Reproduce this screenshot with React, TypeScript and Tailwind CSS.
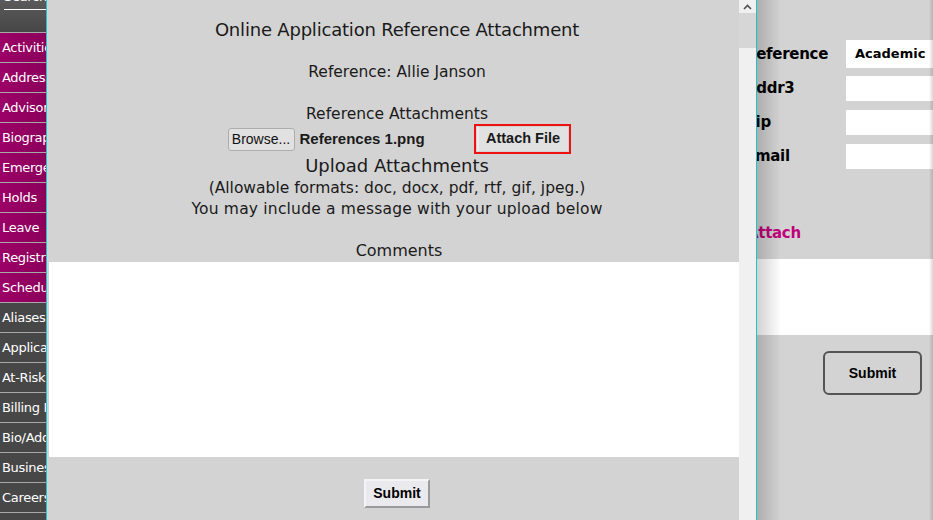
import React from "react";

const gothic = { fontFamily: '"DejaVu Sans", sans-serif' };

const magentaItems = ["Activities", "Addresses", "Advisor", "Biographical", "Emergency", "Holds", "Leave", "Registration", "Schedule"];
const grayItems = ["Aliases", "Applications", "At-Risk", "Billing History", "Bio/Addr", "Business", "Careers", "Contacts"];

function Sidebar() {
  return (
    <div className="w-[46px] shrink-0 h-full bg-[#484848] overflow-hidden text-white text-[13px] font-['DejaVu_Sans',sans-serif] tracking-[-0.3px]">
      <div className="h-[32px] bg-gradient-to-b from-[#5a5a5a] to-[#474747] pl-[4px] overflow-hidden">
        <div className="mt-[-11px] leading-[16px] h-[21px] whitespace-nowrap border-b border-white w-[60px]">Search</div>
      </div>
      {magentaItems.map((t) => (
        <div key={t} className="h-[30px] border-t border-[#a8a8a8] bg-gradient-to-r from-[#9c0066] to-[#8c005c] pl-[2px] flex items-center whitespace-nowrap">
          {t}
        </div>
      ))}
      {grayItems.map((t) => (
        <div key={t} className="h-[30px] border-t border-[#a8a8a8] bg-[#474747] pl-[2px] flex items-center whitespace-nowrap">
          {t}
        </div>
      ))}
    </div>
  );
}

function Modal() {
  return (
    <div className="w-[711px] shrink-0 h-full flex border-x border-[#1fc3d0]">
      <div className="w-[692px] h-full bg-[#d3d3d3] flex flex-col text-[#1a1a1a] font-['DejaVu_Sans',sans-serif]">
        <div className="flex flex-col items-center pl-[8px]">
          <div className="mt-[19px] h-[22px] leading-[22px] text-[18px] tracking-[-0.2px]">Online Application Reference Attachment</div>
          <div className="mt-[21px] h-[20px] leading-[20px] text-[15.5px]">Reference: Allie Janson</div>
          <div className="mt-[22px] h-[20px] leading-[20px] text-[15.5px]">Reference Attachments</div>
          <div className="h-[30px] flex items-center ml-[4px]">
            <button className="h-[23px] w-[67px] bg-[#e1e1e1] border border-[#adadad] rounded-[3px] text-[14px] font-['Liberation_Sans',sans-serif] text-[#111] leading-none">Browse...</button>
            <span className="ml-[5px] w-[174px] text-[15px] font-bold font-['Liberation_Sans',sans-serif]">References 1.png</span>
            <div className="h-[30px] w-[97px] border-2 border-[#ee1111] p-[1px] flex">
              <div className="flex-1 bg-[#e1e1e1] border-l-[2px] border-[#ececec] flex items-center justify-center text-[14.5px] font-bold font-['Liberation_Sans',sans-serif]">Attach File</div>
            </div>
          </div>
          <div className="mt-[1px] h-[22px] leading-[22px] text-[18px]">Upload Attachments</div>
          <div className="mt-[1px] h-[20px] leading-[20px] text-[15.5px]">(Allowable formats: doc, docx, pdf, rtf, gif, jpeg.)</div>
          <div className="mt-[1px] h-[20px] leading-[20px] text-[15.5px] tracking-[0.2px]">You may include a message with your upload below</div>
          <div className="mt-[22px] h-[20px] leading-[20px] text-[16px] ml-[4px]">Comments</div>
        </div>
        <div className="mt-[1px] ml-[2px] w-[690px] h-[195px] bg-white"></div>
        <div className="flex justify-center pl-[8px]">
          <button className="mt-[22px] h-[29px] w-[66px] bg-[#e9e9ee] border-2 border-t-[#f4f4f4] border-l-[#f4f4f4] border-r-[#9a9a9a] border-b-[#9a9a9a] text-[14px] font-bold font-['Liberation_Sans',sans-serif] text-black">Submit</button>
        </div>
      </div>
      <div className="w-[17px] h-full bg-[#f0f0f0] flex flex-col">
        <div className="h-[13px] flex items-center justify-center">
          <svg width="9" height="6" viewBox="0 0 9 6"><path d="M1 5 L4.5 1.5 L8 5" stroke="#505050" strokeWidth="1.6" fill="none" /></svg>
        </div>
        <div className="h-[35px] bg-[#d6d6d6]"></div>
      </div>
    </div>
  );
}

function RightPane() {
  const rows = [
    { label: "Reference", value: "Academic", top: "mt-[40px]", h: "h-[28px]" },
    { label: "Addr3", value: "", top: "mt-[8px]", h: "h-[25px]" },
    { label: "Zip", value: "", top: "mt-[9px]", h: "h-[25px]" },
    { label: "Email", value: "", top: "mt-[9px]", h: "h-[25px]" },
  ];
  return (
    <div className="relative flex-1 h-full bg-[#d3d3d3] overflow-hidden font-['DejaVu_Sans',sans-serif]">
      <div className="flex flex-col">
        {rows.map((r) => (
          <div key={r.label} className={`${r.top} ${r.h} flex items-center`}>
            <div className="ml-[-12px] w-[101px] text-[15px] font-bold text-black whitespace-nowrap tracking-[-0.3px]">{r.label}</div>
            <div className={`flex-1 ${r.h} bg-white flex items-center pl-[9px] text-[13px] font-bold text-black whitespace-nowrap`}>{r.value}</div>
          </div>
        ))}
        <div className="mt-[54px] ml-[-10px] h-[20px] leading-[20px] text-[15px] font-bold text-[#c0007c] tracking-[-0.3px]">Attach</div>
        <div className="mt-[16px] h-[76px] bg-white"></div>
        <div className="mt-[16px] flex justify-end pr-[11px]">
          <button className="w-[99px] h-[44px] rounded-[6px] border-2 border-[#555] text-[14px] font-bold font-['Liberation_Sans',sans-serif] text-black">Submit</button>
        </div>
      </div>
      <div className="pointer-events-none absolute inset-y-0 left-0 w-[24px] bg-gradient-to-r from-[rgba(0,0,0,0.18)] to-transparent"></div>
      <div className="pointer-events-none absolute inset-y-0 right-0 w-[4px] bg-gradient-to-l from-[rgba(0,0,0,0.15)] to-transparent"></div>
    </div>
  );
}

export default function App() {
  return (
    <div className="w-[933px] h-[520px] flex overflow-hidden bg-[#d3d3d3]" style={gothic}>
      <Sidebar />
      <Modal />
      <RightPane />
    </div>
  );
}
